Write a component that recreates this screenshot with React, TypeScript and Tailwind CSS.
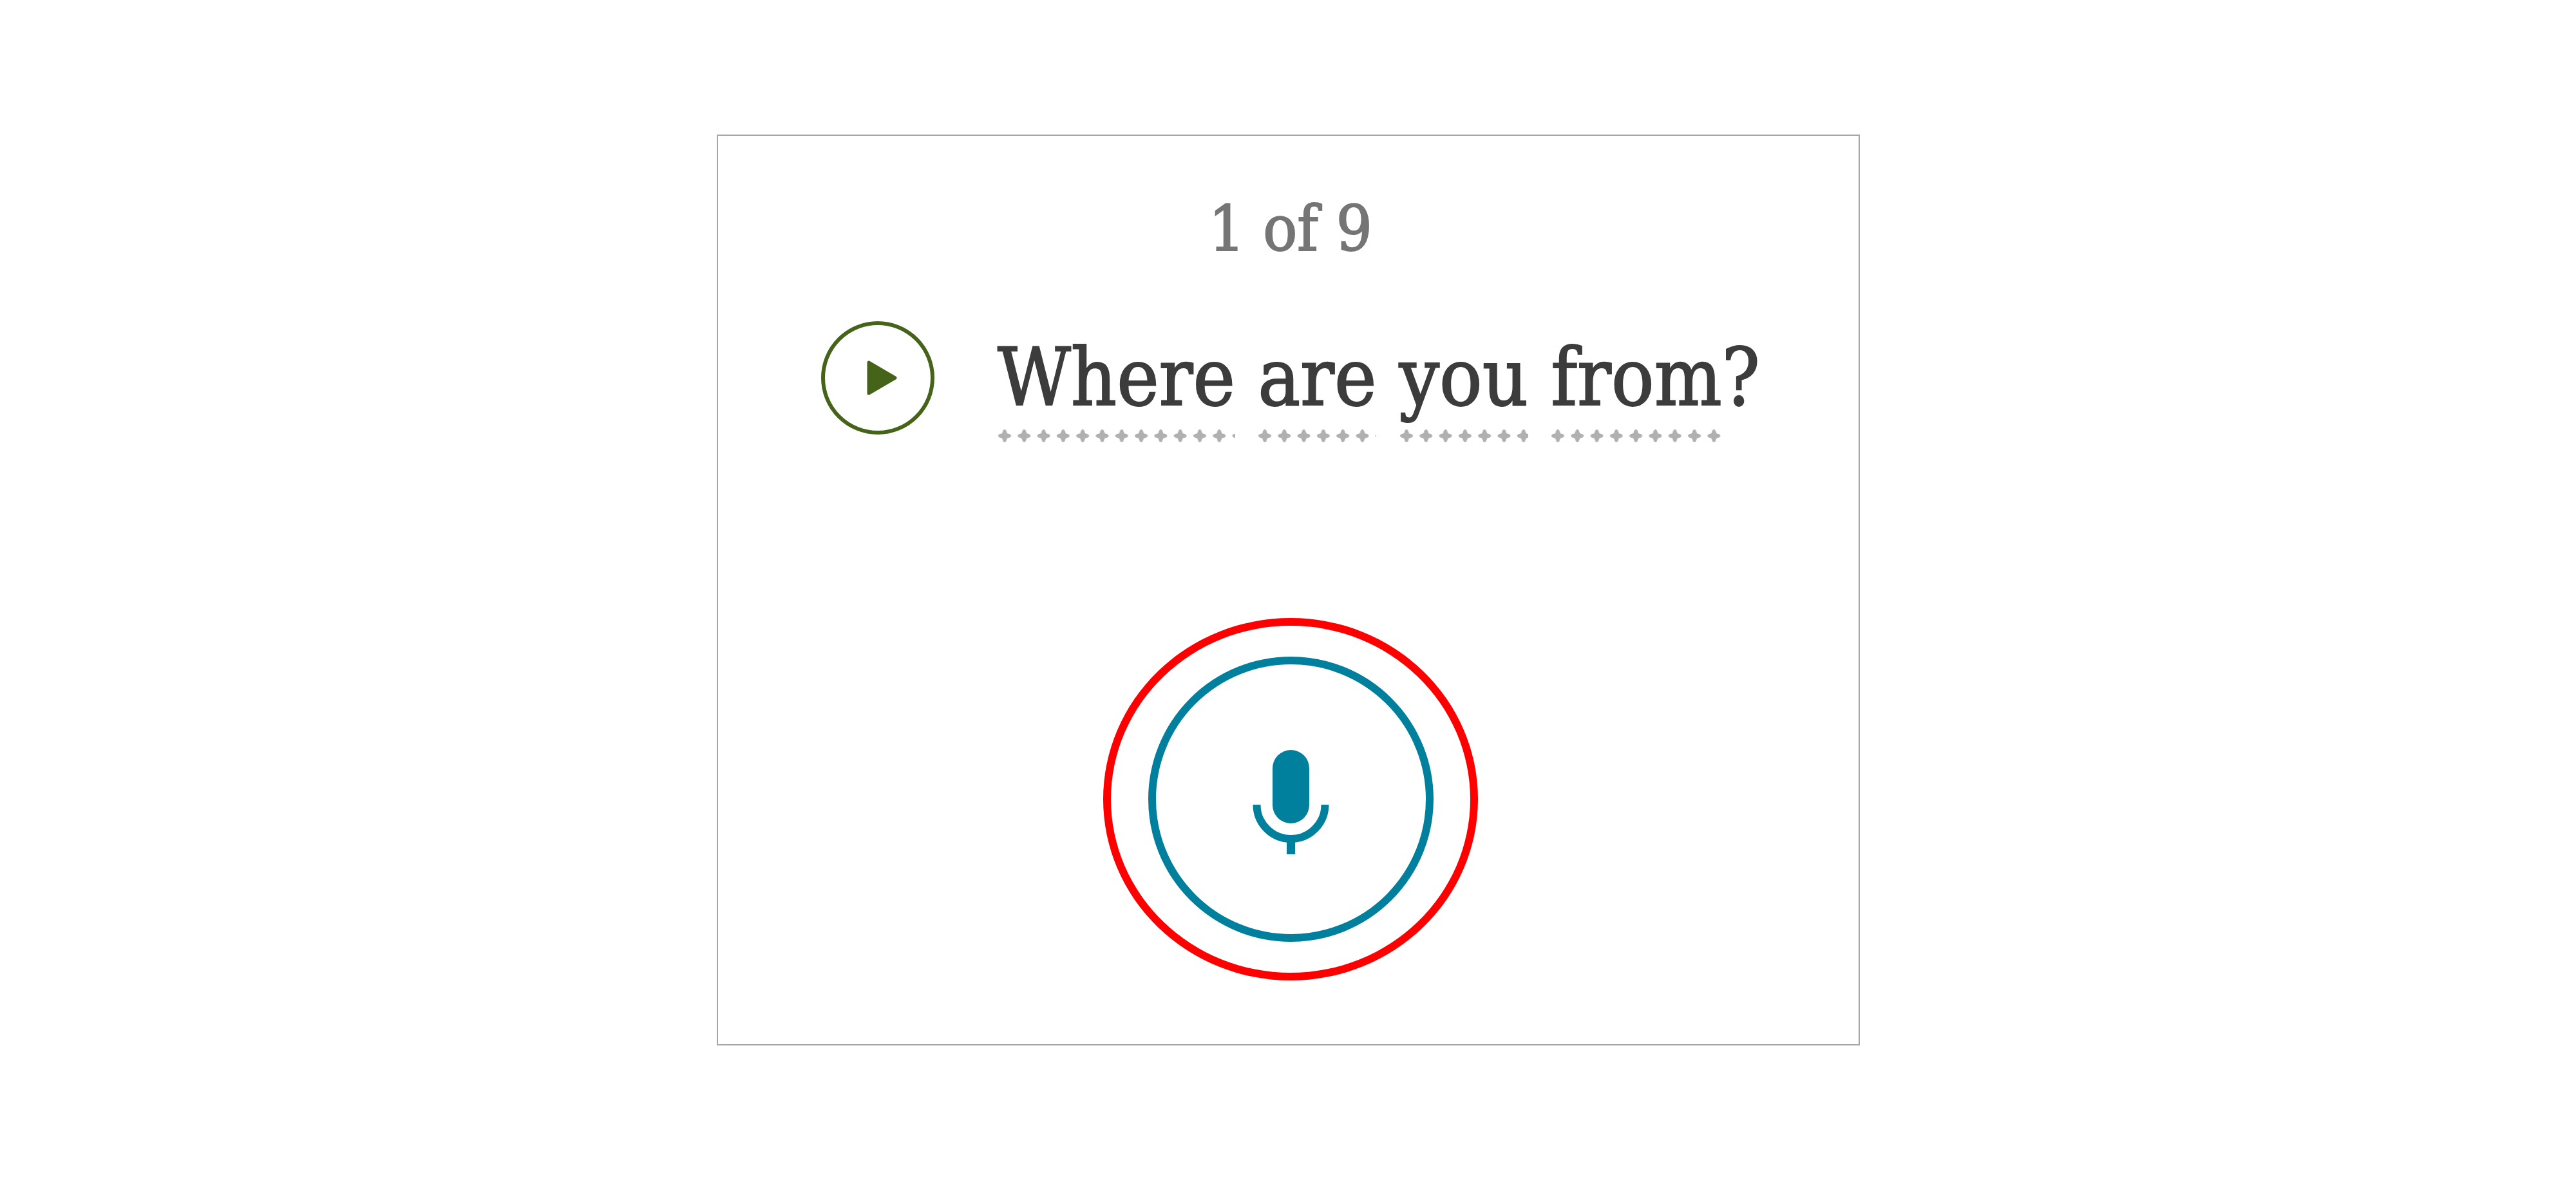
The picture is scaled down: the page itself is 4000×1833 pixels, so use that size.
import { Fragment } from "react";

const words = ["Where", "are", "you", "from"];

function DottedUnderline({ id }: { id: string }) {
  return (
    <svg className="mt-2 block h-5 w-0 min-w-full" aria-hidden="true">
      <defs>
        <pattern id={id} width="30.3" height="20" patternUnits="userSpaceOnUse">
          <path
            d="M9 2Q11 -1 13 2L14.500 6.500L19 8Q22 10 19 12L14.500 13.500L13 18Q11 21 9 18L7.500 13.500L3 12Q0 10 3 8L7.500 6.500Z"
            fill="#b0b0b0"
            stroke="#b0b0b0"
            strokeWidth="1"
          />
        </pattern>
      </defs>
      <rect width="100%" height="20" fill={`url(#${id})`} />
    </svg>
  );
}

function PlayButton() {
  return (
    <button type="button" aria-label="Play sentence" className="size-44 shrink-0 rounded-full">
      <svg viewBox="0 0 176 176" className="size-full" aria-hidden="true">
        <circle cx="88" cy="88" r="85" fill="none" stroke="#466419" strokeWidth="6" />
        <path
          d="M74 64V112L115 88Z"
          fill="#466419"
          stroke="#466419"
          strokeWidth="5"
          strokeLinejoin="round"
        />
      </svg>
    </button>
  );
}

function RecordButton() {
  return (
    <button type="button" aria-label="Record your answer" className="size-[443px] rounded-full">
      <svg viewBox="0 0 443 443" className="size-full" aria-hidden="true">
        <circle cx="221.5" cy="221.5" r="215.5" fill="none" stroke="#00809d" strokeWidth="12" />
        <rect x="193" y="145" width="57" height="114" rx="28.5" fill="#00809d" />
        <path
          d="M168.500 230A53 53 0 0 0 274.500 230"
          fill="none"
          stroke="#00809d"
          strokeWidth="12"
        />
        <rect x="215" y="284" width="13" height="23" fill="#00809d" />
      </svg>
    </button>
  );
}

export default function App() {
  return (
    <main className="flex min-h-screen items-center justify-center bg-white font-['Roboto_Slab','DejaVu_Serif_Condensed','DejaVu_Serif',serif]">
      <section className="flex w-full max-w-[1775px] flex-col items-center border-2 border-[#a6a6a6] bg-white pt-[84px] pb-[99px] pl-2">
        <p className="text-[98px] leading-[120px] text-[#757575] [-webkit-text-stroke:2px_#757575]">
          1 of 9
        </p>

        <div className="mt-[84px] flex items-start gap-[98px]">
          <PlayButton />
          <h1 className="mt-4 text-[123px] leading-[144px] font-normal whitespace-nowrap text-[#3c3c3c] [-webkit-text-stroke:2px_#3c3c3c]">
            {words.map((word, index) => (
              <Fragment key={word}>
                {index > 0 && " "}
                <span className="inline-block">
                  {word}
                  <DottedUnderline id={`dots-${word}`} />
                </span>
              </Fragment>
            ))}
            ?
          </h1>
        </div>

        <div className="mt-[273px] flex h-[563px] w-[582px] items-center justify-center rounded-[50%] border-[12px] border-[#ff0000]">
          <RecordButton />
        </div>
      </section>
    </main>
  );
}
